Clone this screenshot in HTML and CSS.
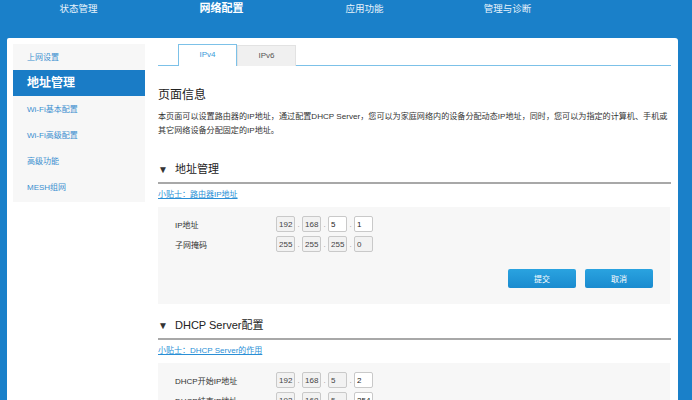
FILE: index.html
```html
<!DOCTYPE html>
<html lang="zh-CN">
<head>
    <meta charset="UTF-8">
    <title>地址管理</title>
    <link rel="stylesheet" href="styles.css">
</head>
<body>
    <div class="topnav">
        <a class="nav-item">状态管理</a>
        <a class="nav-item active">网络配置</a>
        <a class="nav-item">应用功能</a>
        <a class="nav-item">管理与诊断</a>
    </div>

    <div class="panel">
        <ul class="sidebar">
            <li>上网设置</li>
            <li class="current">地址管理</li>
            <li>Wi-Fi基本配置</li>
            <li>Wi-Fi高级配置</li>
            <li>高级功能</li>
            <li>MESH组网</li>
        </ul>

        <div class="main">
            <div class="tabs">
                <div class="tab selected">IPv4</div>
                <div class="tab">IPv6</div>
            </div>

            <h2 class="page-title">页面信息</h2>
            <p class="desc">本页面可以设置路由器的IP地址，通过配置DHCP Server，您可以为家庭网络内的设备分配动态IP地址，同时，您可以为指定的计算机、手机或其它网络设备分配固定的IP地址。</p>

            <h3 class="section-title"><span class="arrow">▼</span>地址管理</h3>
            <a class="tip">小贴士：路由器IP地址</a>
            <div class="form-box">
                <div class="row">
                    <label>IP地址</label>
                    <div class="ip">
                        <input type="text" value="192" disabled><span>.</span>
                        <input type="text" value="168" disabled><span>.</span>
                        <input type="text" value="5" class="edit"><span>.</span>
                        <input type="text" value="1" class="edit">
                    </div>
                </div>
                <div class="row">
                    <label>子网掩码</label>
                    <div class="ip">
                        <input type="text" value="255" disabled><span>.</span>
                        <input type="text" value="255" disabled><span>.</span>
                        <input type="text" value="255" disabled><span>.</span>
                        <input type="text" value="0" disabled>
                    </div>
                </div>
                <div class="actions">
                    <button>提交</button>
                    <button>取消</button>
                </div>
            </div>

            <h3 class="section-title"><span class="arrow">▼</span>DHCP Server配置</h3>
            <a class="tip">小贴士：DHCP Server的作用</a>
            <div class="form-box">
                <div class="row">
                    <label>DHCP开始IP地址</label>
                    <div class="ip">
                        <input type="text" value="192" disabled><span>.</span>
                        <input type="text" value="168" disabled><span>.</span>
                        <input type="text" value="5" disabled><span>.</span>
                        <input type="text" value="2" class="edit">
                    </div>
                </div>
                <div class="row">
                    <label>DHCP结束IP地址</label>
                    <div class="ip">
                        <input type="text" value="192" disabled><span>.</span>
                        <input type="text" value="168" disabled><span>.</span>
                        <input type="text" value="5" disabled><span>.</span>
                        <input type="text" value="254" class="edit">
                    </div>
                </div>
            </div>
        </div>
    </div>
</body>
</html>
```

FILE: styles.css
```css
html, body {
    margin: 0;
    height: 100%;
    overflow: hidden;
}

body {
    background-color: #1a80c9;
    font-family: "Liberation Sans", "Noto Sans CJK SC", sans-serif;
    color: #333;
}

.topnav {
    display: flex;
    height: 38px;
    padding-left: 7px;
}

.nav-item {
    width: 143px;
    text-align: center;
    color: #e8f3fb;
    font-size: 9.5px;
    line-height: 17px;
}

.nav-item.active {
    font-size: 11px;
    font-weight: bold;
    color: #fff;
}

.panel {
    display: flex;
    gap: 13px;
    margin-left: 7px;
    width: 671px;
    height: 400px;
    box-sizing: border-box;
    padding: 6px 7px 0 6px;
    background-color: #fff;
    border-radius: 2px 3px 0 0;
}

.sidebar {
    list-style: none;
    margin: 0;
    padding: 0 0 2px 0;
    width: 132px;
    align-self: flex-start;
    background-color: #f7f7f7;
}

.sidebar li {
    height: 26px;
    line-height: 28px;
    padding-left: 14px;
    font-size: 8px;
    color: #3b8fd0;
}

.sidebar li.current {
    line-height: 26px;
    background-color: #1a7cc6;
    color: #fff;
    font-size: 12px;
    font-weight: bold;
}

.main {
    flex: 1;
}

.tabs {
    display: flex;
    padding-left: 20px;
    border-bottom: 1px solid #7cc1e8;
    height: 21px;
}

.tab {
    width: 57px;
    height: 20px;
    margin-top: 1px;
    text-align: center;
    line-height: 20px;
    font-size: 8px;
    color: #555;
    background-color: #f0f0f0;
    border: 1px solid #e2e2e2;
    border-bottom: none;
}

.tab.selected {
    height: 21px;
    margin-top: 0;
    background-color: #fff;
    color: #3a9ad9;
    border-color: #7cc1e8;
}

.page-title {
    margin: 21px 0 0 0;
    font-size: 12px;
    font-weight: normal;
    line-height: 16px;
    color: #222;
}

.desc {
    margin: 7px 0 0 0;
    font-size: 8.1px;
    line-height: 14px;
    color: #333;
}

.section-title {
    margin: 23px 0 0 0;
    padding-bottom: 4px;
    border-bottom: 2px solid #a8a8a8;
    font-size: 11px;
    font-weight: normal;
    line-height: 16px;
    color: #222;
}

.section-title + .tip {
    margin-top: 5px;
}

.form-box + .section-title {
    margin-top: 13px;
}

.arrow {
    display: inline-block;
    width: 17px;
    font-size: 10px;
    color: #333;
}

.tip {
    display: block;
    font-size: 8px;
    line-height: 12px;
    color: #2a8fd6;
    text-decoration: underline;
}

.form-box {
    margin-top: 6px;
    width: 512px;
    padding: 7px 17px 16px 17px;
    box-sizing: border-box;
    background-color: #f7f7f7;
}

.row {
    display: flex;
    align-items: center;
    height: 20px;
}

.row label {
    width: 101px;
    font-size: 8px;
    color: #333;
}

.ip {
    display: flex;
    align-items: center;
}

.ip span {
    width: 7px;
    text-align: center;
    font-size: 8px;
    color: #999;
}

.ip input {
    width: 19px;
    height: 16px;
    padding: 0 0 0 2px;
    margin: 0;
    box-sizing: border-box;
    border: 1px solid #c9c9c9;
    border-radius: 2px;
    background-color: #f2f2f2;
    font-family: "Liberation Sans", sans-serif;
    font-size: 8px;
    color: #444;
}

.ip input.edit {
    background-color: #fff;
    color: #222;
}

.actions {
    display: flex;
    justify-content: flex-end;
    gap: 9px;
    margin-top: 15px;
}

.actions button {
    width: 68px;
    height: 19px;
    border: none;
    border-radius: 2px;
    background: linear-gradient(#2aa3e0, #1a8bcf);
    color: #fff;
    font-family: "Liberation Sans", "Noto Sans CJK SC", sans-serif;
    font-size: 8px;
}
```
